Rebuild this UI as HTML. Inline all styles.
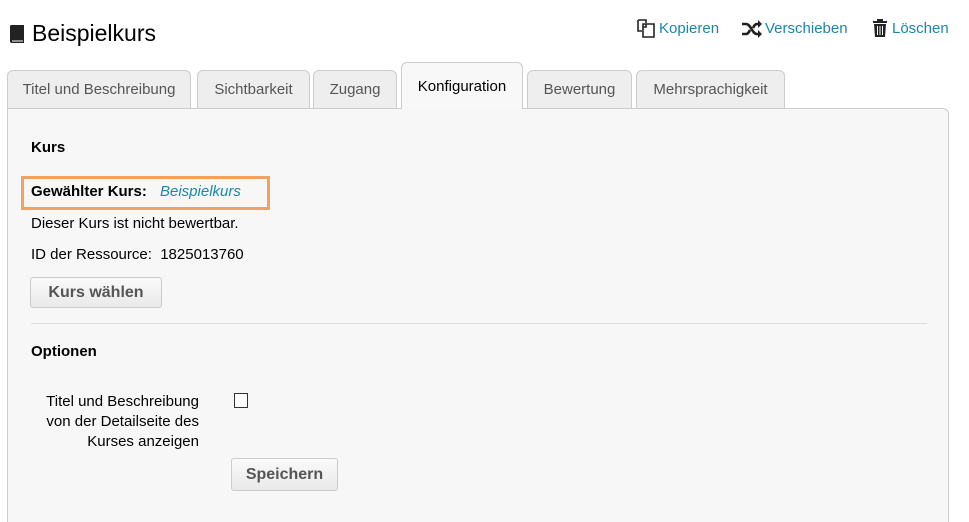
<!DOCTYPE html>
<html><head><meta charset="utf-8"><style>
*{box-sizing:border-box;margin:0;padding:0}
html,body{width:969px;height:522px;overflow:hidden}
body{background:#fff;font-family:"Liberation Sans",Arial,sans-serif;color:#000;position:relative;font-size:15px}
.abs{position:absolute}
.tab{position:absolute;top:70px;height:39px;background:#eee;border:1px solid #ccc;border-bottom:none;border-radius:6px 6px 0 0;color:#555;font-size:15px;text-align:center;line-height:37px}
.act{top:62px;height:47px;background:#f8f8f8;color:#000;line-height:48px;z-index:2}
.panel{position:absolute;left:7px;top:108px;width:942px;height:430px;background:#f7f7f7;border:1px solid #ccc;border-radius:0 6px 0 0}
.btn{position:absolute;background:linear-gradient(#fafafa,#e9e9e9);border:1px solid #ccc;border-radius:3px;font-weight:bold;color:#555;font-size:16px;text-align:center}
.lnk{color:#1a87a8;font-size:15px}
</style></head><body>
<svg class="abs" style="left:8px;top:24px" width="18" height="20" viewBox="0 0 18 20"><path d="M3 1h13v15H3z" fill="#222"/><path d="M3 16h13v3H3.5A2 2 0 0 1 2 17V2a1.5 1.5 0 0 1 1-1z" fill="#222"/><path d="M4 17h11" stroke="#fff" stroke-width="1"/></svg>
<div class="abs" style="left:32px;top:20px;font-size:23px">Beispielkurs</div>

<svg class="abs" style="left:637px;top:19px" width="20" height="20" viewBox="0 0 20 20" fill="none" stroke="#222" stroke-width="1.6"><path d="M1 1h8v3M1 1v11h4"/><path d="M6 5h11v13H6z"/><path d="M9 5v3H6"/></svg>
<div class="abs lnk" style="left:659px;top:20px">Kopieren</div>
<svg class="abs" style="left:741px;top:20px" width="22" height="18" viewBox="0 0 22 18" fill="none" stroke="#222" stroke-width="2.6"><path d="M1 4h4c5 0 6 10 11 10h2M1 14h4c2 0 3-2 4-4M12 8c1-2 2-4 4-4h2"/><path d="M17 0l4 4-4 4zM17 10l4 4-4 4z" fill="#222" stroke="none"/></svg>
<div class="abs lnk" style="left:765px;top:20px">Verschieben</div>
<svg class="abs" style="left:872px;top:18px" width="16" height="20" viewBox="0 0 16 20"><path d="M5 1h6v2h4v2H1V3h4z" fill="#222"/><path d="M2 6h12l-1 13H3z" fill="#222"/><path d="M5.5 8v9M8 8v9M10.5 8v9" stroke="#fff" stroke-width="1"/></svg>
<div class="abs lnk" style="left:892px;top:20px">Löschen</div>

<div class="tab" style="left:7px;width:184px">Titel und Beschreibung</div>
<div class="tab" style="left:197px;width:113px">Sichtbarkeit</div>
<div class="tab" style="left:313px;width:84px">Zugang</div>
<div class="tab act" style="left:401px;width:122px">Konfiguration</div>
<div class="tab" style="left:527px;width:105px">Bewertung</div>
<div class="tab" style="left:636px;width:149px">Mehrsprachigkeit</div>

<div class="panel"></div>
<div class="abs" style="left:31px;top:139px;font-weight:bold;font-size:15px">Kurs</div>
<div class="abs" style="left:21px;top:176px;width:249px;height:34px;border:3px solid #f0a25e"></div>
<div class="abs" style="left:31px;top:183px;font-weight:bold">Gewählter Kurs:</div>
<div class="abs" style="left:160px;top:183px;font-style:italic;color:#1a87a8">Beispielkurs</div>
<div class="abs" style="left:31px;top:215px">Dieser Kurs ist nicht bewertbar.</div>
<div class="abs" style="left:31px;top:246px">ID der Ressource:&nbsp; 1825013760</div>
<div class="btn" style="left:30px;top:277px;width:132px;height:31px;line-height:29px">Kurs wählen</div>
<div class="abs" style="left:31px;top:323px;width:896px;height:1px;background:#ddd"></div>
<div class="abs" style="left:31px;top:343px;font-weight:bold;font-size:15px">Optionen</div>
<div class="abs" style="left:20px;top:392px;width:179px;text-align:right;line-height:20px">Titel und Beschreibung von der Detailseite des Kurses anzeigen</div>
<div class="abs" style="left:234px;top:393px;width:14px;height:15px;border:1px solid #333;background:#fff"></div>
<div class="btn" style="left:231px;top:458px;width:107px;height:33px;line-height:31px">Speichern</div>
</body></html>
